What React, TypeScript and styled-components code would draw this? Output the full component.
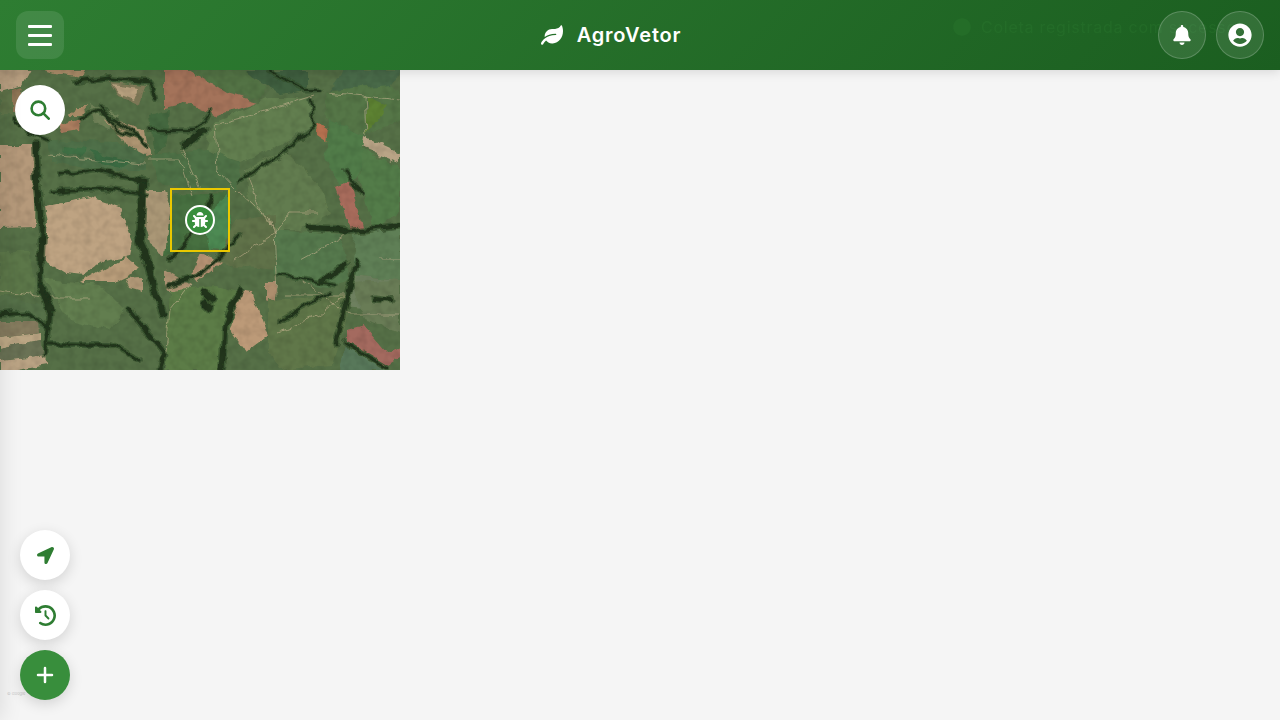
import React from 'react';
import styled, { createGlobalStyle } from 'styled-components';
import { FaBell, FaBug, FaCircle, FaLeaf, FaLocationArrow, FaUserCircle } from 'react-icons/fa';
import { FaClockRotateLeft } from 'react-icons/fa6';
import { Plus } from 'lucide-react';

const GlobalStyle = createGlobalStyle`
  html, body { margin: 0; padding: 0; height: 100%; background: #f5f5f5; overflow: hidden; }
  * { box-sizing: border-box; }
  body { font-family: "Inter", "Noto Sans", sans-serif; }
`;

const Page = styled.div`
  position: relative;
  width: 100%;
  height: 720px;
  overflow: hidden;
  background: #f5f5f5;
`;

const Header = styled.header`
  position: relative;
  z-index: 3;
  height: 70px;
  padding: 0 16px;
  display: flex;
  align-items: center;
  justify-content: space-between;
  background: linear-gradient(135deg, #2e7d32, #1b5e20);
  box-shadow: 0 2px 10px rgba(0, 0, 0, 0.12);
`;

const MenuButton = styled.button`
  width: 48px;
  height: 48px;
  padding: 0;
  border: 0;
  border-radius: 12px;
  background: rgba(255, 255, 255, 0.1);
  display: flex;
  flex-direction: column;
  align-items: center;
  justify-content: center;
  gap: 6px;
`;

const MenuBar = styled.span`
  width: 24px;
  height: 3px;
  border-radius: 1px;
  background: #fff;
`;

const Title = styled.div`
  display: flex;
  align-items: center;
  gap: 14px;
  color: #fff;
  font-size: 20px;
  font-weight: 600;
  letter-spacing: 0.8px;
  svg { font-size: 22px; }
`;

const HeaderActions = styled.div`
  position: relative;
  z-index: 1;
  display: flex;
  gap: 10px;
`;

const RoundAction = styled.button<{ $size: number }>`
  width: 48px;
  height: 48px;
  padding: 0;
  border: 1px solid rgba(255, 255, 255, 0.2);
  border-radius: 50%;
  background: rgba(255, 255, 255, 0.1);
  color: #fff;
  display: flex;
  align-items: center;
  justify-content: center;
  font-size: ${(p) => p.$size}px;
`;

const Toast = styled.div`
  position: absolute;
  left: 953px;
  top: 17px;
  display: flex;
  align-items: center;
  gap: 10px;
  color: #2e7d32;
  opacity: 0.3;
  font-size: 16px;
  font-weight: 400;
  white-space: nowrap;
  letter-spacing: 0.75px;
  svg { font-size: 18px; }
`;

const MapArea = styled.main`
  position: relative;
  width: 400px;
  height: 300px;
`;

const MapSvg = styled.svg`
  display: block;
  width: 400px;
  height: 300px;
`;

const SearchButton = styled.button`
  position: absolute;
  left: 15px;
  top: 15px;
  width: 50px;
  height: 50px;
  padding: 0;
  border: 0;
  border-radius: 50%;
  background: #fff;
  color: #2e7d32;
  display: flex;
  align-items: center;
  justify-content: center;
`;

const SelectionBox = styled.div`
  position: absolute;
  left: 170px;
  top: 118px;
  width: 60px;
  height: 64px;
  border: 2px solid #eac800;
  display: flex;
  align-items: center;
  justify-content: center;
`;

const Pest = styled.div`
  width: 30px;
  height: 30px;
  border: 2px solid #fff;
  border-radius: 50%;
  background: #388e3c;
  color: #fff;
  display: flex;
  align-items: center;
  justify-content: center;
  font-size: 16px;
`;

const Sidebar = styled.aside`
  position: absolute;
  z-index: 1;
  left: -280px;
  top: 0;
  width: 280px;
  height: 100%;
  box-shadow: 2px 0 20px rgba(0, 0, 0, 0.1);
`;

const Fabs = styled.div`
  position: absolute;
  z-index: 2;
  left: 20px;
  bottom: 20px;
  display: flex;
  flex-direction: column;
  gap: 10px;
`;

const Fab = styled.button<{ $primary?: boolean; $size?: number }>`
  width: 50px;
  height: 50px;
  padding: 0;
  border: 0;
  border-radius: 50%;
  background: ${(p) => (p.$primary ? '#388e3c' : '#fff')};
  color: ${(p) => (p.$primary ? '#fff' : '#2e7d32')};
  box-shadow: 0 4px 14px rgba(0, 0, 0, 0.14);
  display: flex;
  align-items: center;
  justify-content: center;
  font-size: ${(p) => p.$size ?? 20}px;
`;

const Attribution = styled.span`
  position: absolute;
  z-index: 1;
  left: 7px;
  bottom: 24px;
  font-size: 4px;
  line-height: 5px;
  color: #c4c4c4;
  white-space: nowrap;
`;

const fields: [string, string][] = [
  ['#b89f80', '0,0 30,0 22,15 0,22'],
  ['#5f7348', '0,22 12,20 13,45 0,45'],
  ['#8f7455', '12,20 22,17 16,42 12,42'],
  ['#a98b68', '45,0 85,0 82,8 62,5'],
  ['#7f7a58', '110,12 145,16 140,35 118,25'],
  ['#b7a07e', '112,14 140,18 135,30 120,24'],
  ['#a68a66', '75,37 88,37 82,45 70,45'],
  ['#ab7d5e', '62,53 80,48 78,60 60,63'],
  ['#6f8259', '90,35 118,45 110,60 95,52'],
  ['#ae9572', '105,50 120,50 145,62 150,85 132,92 125,70'],
  ['#a4735a', '165,0 190,0 227,23 258,32 240,38 213,45 187,33 165,38'],
  ['#527345', '190,0 245,0 268,20 262,30 228,22'],
  ['#3f6040', '245,0 307,0 307,20 280,24 265,15'],
  ['#627e50', '214,52 268,28 312,28 315,52 282,75 240,92 205,80'],
  ['#4f7246', '150,85 205,80 240,92 238,120 190,120 158,112'],
  ['#44693f', '150,45 170,40 165,75 155,85'],
  ['#547647', '325,22 385,10 400,20 400,50 367,65 327,50'],
  ['#5d8233', '367,27 387,37 367,63'],
  ['#4a6b48', '400,0 345,0 330,20 390,15'],
  ['#b5704f', '317,53 337,65 333,75 318,65'],
  ['#aa7a5c', '283,88 290,90 320,135 313,138'],
  ['#a86c5c', '335,117 350,110 363,160 352,162'],
  ['#b9a486', '365,67 400,83 400,93 363,78'],
  ['#627b4f', '245,100 283,80 320,115 330,145 300,160 275,160 248,130'],
  ['#517b4a', '330,50 365,65 360,105 340,115 325,90'],
  ['#537c49', '362,80 400,95 400,140 375,160 360,110'],
  ['#4f7048', '47,70 120,72 145,85 145,100 90,100 50,90'],
  ['#3a6b42', '88,82 130,90 125,98 100,92'],
  ['#3f6f44', '65,75 85,78 82,86 64,82'],
  ['#b5997a', '0,75 35,75 36,100 35,157 0,158'],
  ['#bea382', '45,137 90,127 120,137 133,170 130,185 105,190 85,205 65,203 38,186 48,155'],
  ['#b99d7a', '80,212 125,187 140,200 115,212'],
  ['#b09776', '125,208 143,207 143,222 130,218'],
  ['#aa9776', '145,120 165,120 172,140 165,185 150,175 143,150'],
  ['#47703f', '172,125 228,122 232,180 205,180 165,185'],
  ['#4d8a52', '205,145 228,125 232,182 210,180'],
  ['#b59273', '200,183 222,192 197,213 190,205'],
  ['#ab9272', '165,200 190,215 178,233 165,215'],
  ['#607249', '235,150 275,145 275,200 230,195 218,192'],
  ['#56794d', '275,160 340,165 350,210 325,218 275,205'],
  ['#5f7f57', '355,165 400,158 400,210 352,205'],
  ['#6e805e', '355,205 400,210 400,240 340,235'],
  ['#5b7748', '0,182 30,182 35,225 0,225'],
  ['#627e50', '45,210 100,215 125,240 110,260 70,250'],
  ['#56714a', '0,225 45,235 45,260 0,250'],
  ['#bba684', '0,267 40,262 40,270 0,278'],
  ['#867b5e', '0,252 37,252 38,262 0,267'],
  ['#6b7254', '0,278 40,270 45,285 0,290'],
  ['#baa384', '0,290 47,285 48,295 17,300 0,300'],
  ['#5c7c47', '170,220 215,215 240,222 225,270 225,300 165,300'],
  ['#bc9a78', '240,220 252,222 268,267 247,283 230,260'],
  ['#ad8e6e', '265,212 278,212 275,235 265,232'],
  ['#617749', '268,230 350,225 345,255 330,295 280,300 268,280'],
  ['#a46b5e', '347,260 363,255 387,283 400,277 400,287 388,295 347,270'],
  ['#697c56', '350,212 400,210 400,262 365,250'],
  ['#59785a', '345,275 385,300 340,300'],
];

const forests: [number, string][] = [
  [5, '36,75 38,120 42,160 40,215 52,240'],
  [4, '40,215 50,245 46,285'],
  [6, '143,115 140,170 152,210 163,245'],
  [3, '60,105 100,100 145,112'],
  [2.5, '50,122 100,118 148,125'],
  [2, '48,70 30,62 15,48'],
  [3, '75,12 110,8 150,12 155,28'],
  [2.5, '80,48 100,40 130,60 145,75'],
  [2, '100,35 118,60 142,70'],
  [4, '130,240 165,285 160,300'],
  [3, '50,275 110,275 140,290'],
  [3, '0,245 25,243 50,258'],
  [5, '240,220 225,255 222,300'],
  [2.5, '168,215 200,205 230,175 240,165'],
  [3, '170,190 195,160 212,125'],
  [2, '150,60 195,60 210,40'],
  [6, '185,75 205,60'],
  [2, '240,110 280,85 315,55'],
  [2, '310,30 314,55'],
  [6, '310,158 345,160'],
  [4, '345,162 400,155'],
  [4, '358,190 350,215 335,275'],
  [5, '323,210 345,195'],
  [2, '280,205 335,215'],
  [2.5, '280,250 330,222'],
  [3, '345,272 388,298'],
  [7, '205,222 212,228'],
  [7, '205,233 210,238'],
  [3, '345,100 362,125 350,115'],
  [4, '375,228 392,230'],
  [2, '270,0 305,20 320,20'],
];

const roads: string[] = [
  '100,35 118,60 130,65',
  '47,85 145,93',
  '148,90 180,90 192,125',
  '182,78 200,118',
  '215,55 218,100 235,118',
  '215,55 262,42 315,25',
  '328,22 400,30',
  '365,25 367,65',
  '238,120 270,150 275,165',
  '235,190 275,163 290,142 320,142',
  '275,160 278,225',
  '300,210 350,245 400,245',
  '380,190 400,190',
  '170,240 165,290',
  '190,215 170,240',
  '300,190 345,165',
  '285,225 345,225 320,245 280,262',
  '0,220 50,228 90,228',
  '245,100 260,140 275,160',
];

const MapImage = () => (
  <MapSvg viewBox="0 0 400 300" aria-label="Imagem de satélite">
    <defs>
      <filter id="organic" x="0" y="0" width="100%" height="100%">
        <feTurbulence type="fractalNoise" baseFrequency="0.07" numOctaves="3" seed="4" result="warp" />
        <feDisplacementMap in="SourceGraphic" in2="warp" scale="9" xChannelSelector="R" yChannelSelector="G" />
        <feGaussianBlur stdDeviation="0.5" />
      </filter>
      <filter id="grain" x="0" y="0" width="100%" height="100%">
        <feTurbulence type="fractalNoise" baseFrequency="0.12" numOctaves="2" seed="8" />
        <feColorMatrix values="0 0 0 0 0  0 0 0 0 0  0 0 0 0 0  0.8 0 0 0 -0.3" />
      </filter>
    </defs>
    <g filter="url(#organic)">
      <rect x="-10" y="-10" width="420" height="320" fill="#566f46" />
      {fields.map(([color, points]) => (
        <polygon key={points} points={points} fill={color} />
      ))}
      {roads.map((points) => (
        <polyline key={points} points={points} fill="none" stroke="#c0b08c" strokeOpacity="0.65" strokeWidth="1" />
      ))}
      {forests.map(([width, points]) => (
        <polyline key={`halo-${points}`} points={points} fill="none" stroke="#34502c" strokeOpacity="0.7" strokeWidth={width + 3} strokeLinejoin="round" strokeLinecap="round" />
      ))}
      {forests.map(([width, points]) => (
        <polyline key={points} points={points} fill="none" stroke="#20351b" strokeWidth={width} strokeLinejoin="round" strokeLinecap="round" />
      ))}
    </g>
    <rect width="400" height="300" filter="url(#grain)" opacity="0.25" />
  </MapSvg>
);

const SearchGlyph = () => (
  <svg width="20" height="20" viewBox="0 0 20 20" fill="none" stroke="currentColor" strokeWidth="2.6" strokeLinecap="round">
    <circle cx="8.4" cy="8.4" r="6.8" />
    <line x1="13.4" y1="13.4" x2="18.7" y2="18.7" />
  </svg>
);

export default function App() {
  return (
    <Page>
      <GlobalStyle />
      <Sidebar />
      <Header>
        <MenuButton aria-label="Menu">
          <MenuBar />
          <MenuBar />
          <MenuBar />
        </MenuButton>
        <Title>
          <FaLeaf />
          AgroVetor
        </Title>
        <Toast>
          <FaCircle />
          Coleta registrada com sucesso!
        </Toast>
        <HeaderActions>
          <RoundAction $size={20} aria-label="Notificações"><FaBell /></RoundAction>
          <RoundAction $size={24} aria-label="Perfil"><FaUserCircle /></RoundAction>
        </HeaderActions>
      </Header>
      <MapArea>
        <MapImage />
        <SearchButton aria-label="Buscar"><SearchGlyph /></SearchButton>
        <SelectionBox>
          <Pest><FaBug /></Pest>
        </SelectionBox>
      </MapArea>
      <Attribution>© Google</Attribution>
      <Fabs>
        <Fab $size={17} aria-label="Localização"><FaLocationArrow /></Fab>
        <Fab $size={21} aria-label="Histórico"><FaClockRotateLeft /></Fab>
        <Fab $primary aria-label="Adicionar"><Plus size={24} strokeWidth={2.5} /></Fab>
      </Fabs>
    </Page>
  );
}
